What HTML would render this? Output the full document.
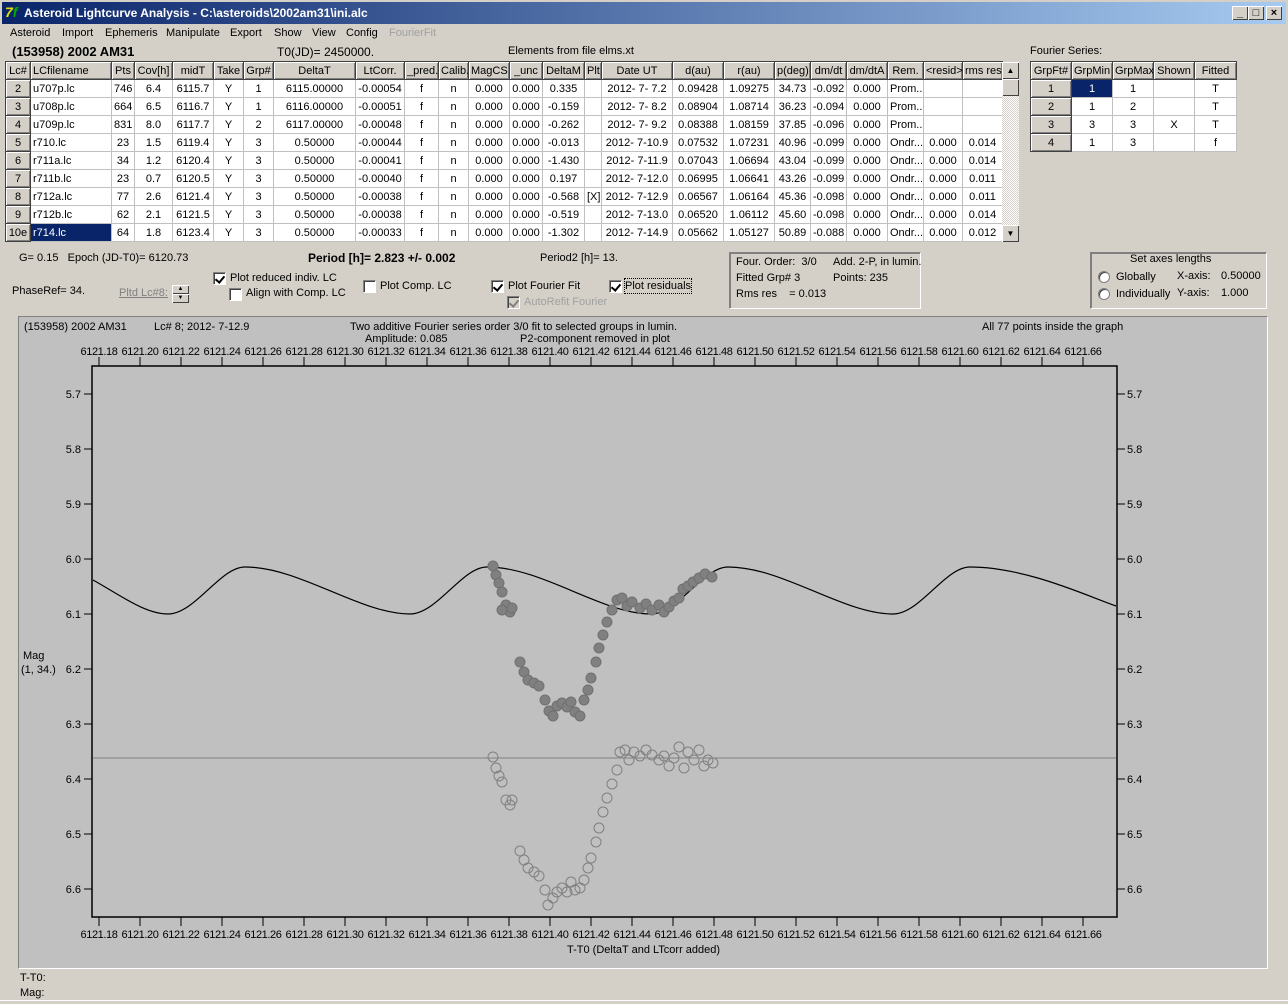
<!DOCTYPE html>
<html><head><meta charset="utf-8"><style>
*{margin:0;padding:0;box-sizing:border-box}
body{width:1288px;height:1004px;background:#d4d0c8;font-family:"Liberation Sans",sans-serif;font-size:11px;color:#000;position:relative;overflow:hidden}
.a{position:absolute;white-space:nowrap;line-height:14px}
.b{font-weight:bold}
.g{color:#808080}
table{position:absolute;border-collapse:collapse;table-layout:fixed;background:#fff}
td,th{height:18px;padding:0 2px;border:1px solid #c0c0c0;font-weight:normal;text-align:center;overflow:hidden;white-space:nowrap;font-size:11px}
th,td.h{background:#d4d0c8;box-shadow:inset 1px 1px #fff,inset -1px -1px #808080;border:1px solid #404040}
td.l{text-align:left}
td.sel{background:#0a246a;color:#fff;text-align:left}
.cb{position:absolute;width:13px;height:13px;background:#fff;border:1px solid;border-color:#808080 #fff #fff #808080;box-shadow:inset 1px 1px #404040}
.cb.k::after{content:"";position:absolute;left:3px;top:1px;width:4px;height:7px;border:solid #000;border-width:0 2px 2px 0;transform:rotate(40deg)}
.cb.dis{background:#d4d0c8}.cb.dis::after{border-color:#808080}
.grp{position:absolute;border:1px solid;border-color:#808080 #fff #fff #808080;box-shadow:1px 1px #808080 inset}
.rad{position:absolute;width:12px;height:12px;border-radius:50%;background:#fff;border:1px solid #808080;box-shadow:inset 1px 1px #404040}
.btn{position:absolute;width:16px;height:14px;background:#d4d0c8;box-shadow:inset 1px 1px #fff,inset -1px -1px #404040;font-size:11px;font-weight:bold;text-align:center;line-height:14px}
</style></head><body>
<!-- title bar -->
<div class="a" style="left:0;top:0;width:1288px;height:24px;background:linear-gradient(90deg,#0a246a,#a6caf0);border:2px solid #d4d0c8;border-bottom:0"></div>
<div class="a" style="left:5px;top:4px;width:17px;height:17px;color:#e0e000;font-weight:bold;font-size:14px;line-height:17px;font-style:italic">7<span style="color:#0a0">f</span></div>
<div class="a b" style="left:24px;top:6px;color:#fff;font-size:12px">Asteroid Lightcurve Analysis - C:\asteroids\2002am31\ini.alc</div>
<div class="btn" style="left:1232px;top:6px">_</div><div class="btn" style="left:1248px;top:6px">&#9633;</div><div class="btn" style="left:1266px;top:6px">×</div>
<!-- menu -->
<div class="a" style="left:10px;top:26px">Asteroid</div>
<div class="a" style="left:62px;top:26px">Import</div>
<div class="a" style="left:105px;top:26px">Ephemeris</div>
<div class="a" style="left:166px;top:26px">Manipulate</div>
<div class="a" style="left:230px;top:26px">Export</div>
<div class="a" style="left:274px;top:26px">Show</div>
<div class="a" style="left:312px;top:26px">View</div>
<div class="a" style="left:346px;top:26px">Config</div>
<div class="a g" style="left:389px;top:26px;color:#a0a0a0">FourierFit</div>
<div class="a b" style="left:12px;top:45px;font-size:13px">(153958) 2002 AM31</div>
<div class="a" style="left:277px;top:45px;font-size:12px">T0(JD)= 2450000.</div>
<div class="a" style="left:508px;top:44px">Elements from file elms.xt</div>
<div class="a" style="left:1030px;top:44px">Fourier Series:</div>
<!-- main table -->
<table style="left:5px;top:61px;width:997px">
<colgroup><col style="width:25px"><col style="width:81px"><col style="width:23px"><col style="width:38px"><col style="width:41px"><col style="width:30px"><col style="width:30px"><col style="width:82px"><col style="width:49px"><col style="width:34px"><col style="width:30px"><col style="width:41px"><col style="width:33px"><col style="width:42px"><col style="width:17px"><col style="width:71px"><col style="width:51px"><col style="width:51px"><col style="width:36px"><col style="width:36px"><col style="width:41px"><col style="width:36px"><col style="width:39px"><col style="width:40px"></colgroup>
<tr><th>Lc#</th><th style="text-align:left">LCfilename</th><th>Pts</th><th>Cov[h]</th><th>midT</th><th>Take</th><th>Grp#</th><th>DeltaT</th><th>LtCorr.</th><th>_pred.</th><th>Calib.</th><th>MagCS</th><th>_unc</th><th>DeltaM</th><th>Plt</th><th>Date UT</th><th>d(au)</th><th>r(au)</th><th>p(deg)</th><th>dm/dt</th><th>dm/dtA</th><th>Rem.</th><th>&lt;resid&gt;</th><th>rms res</th></tr>
<tr><td class="h">2</td><td class="l">u707p.lc</td><td>746</td><td>6.4</td><td>6115.7</td><td>Y</td><td>1</td><td>6115.00000</td><td>-0.00054</td><td>f</td><td>n</td><td>0.000</td><td>0.000</td><td>0.335</td><td></td><td>2012- 7- 7.2</td><td>0.09428</td><td>1.09275</td><td>34.73</td><td>-0.092</td><td>0.000</td><td class="l">Prom...</td><td></td><td></td></tr>
<tr><td class="h">3</td><td class="l">u708p.lc</td><td>664</td><td>6.5</td><td>6116.7</td><td>Y</td><td>1</td><td>6116.00000</td><td>-0.00051</td><td>f</td><td>n</td><td>0.000</td><td>0.000</td><td>-0.159</td><td></td><td>2012- 7- 8.2</td><td>0.08904</td><td>1.08714</td><td>36.23</td><td>-0.094</td><td>0.000</td><td class="l">Prom...</td><td></td><td></td></tr>
<tr><td class="h">4</td><td class="l">u709p.lc</td><td>831</td><td>8.0</td><td>6117.7</td><td>Y</td><td>2</td><td>6117.00000</td><td>-0.00048</td><td>f</td><td>n</td><td>0.000</td><td>0.000</td><td>-0.262</td><td></td><td>2012- 7- 9.2</td><td>0.08388</td><td>1.08159</td><td>37.85</td><td>-0.096</td><td>0.000</td><td class="l">Prom...</td><td></td><td></td></tr>
<tr><td class="h">5</td><td class="l">r710.lc</td><td>23</td><td>1.5</td><td>6119.4</td><td>Y</td><td>3</td><td>0.50000</td><td>-0.00044</td><td>f</td><td>n</td><td>0.000</td><td>0.000</td><td>-0.013</td><td></td><td>2012- 7-10.9</td><td>0.07532</td><td>1.07231</td><td>40.96</td><td>-0.099</td><td>0.000</td><td class="l">Ondr...</td><td>0.000</td><td>0.014</td></tr>
<tr><td class="h">6</td><td class="l">r711a.lc</td><td>34</td><td>1.2</td><td>6120.4</td><td>Y</td><td>3</td><td>0.50000</td><td>-0.00041</td><td>f</td><td>n</td><td>0.000</td><td>0.000</td><td>-1.430</td><td></td><td>2012- 7-11.9</td><td>0.07043</td><td>1.06694</td><td>43.04</td><td>-0.099</td><td>0.000</td><td class="l">Ondr...</td><td>0.000</td><td>0.014</td></tr>
<tr><td class="h">7</td><td class="l">r711b.lc</td><td>23</td><td>0.7</td><td>6120.5</td><td>Y</td><td>3</td><td>0.50000</td><td>-0.00040</td><td>f</td><td>n</td><td>0.000</td><td>0.000</td><td>0.197</td><td></td><td>2012- 7-12.0</td><td>0.06995</td><td>1.06641</td><td>43.26</td><td>-0.099</td><td>0.000</td><td class="l">Ondr...</td><td>0.000</td><td>0.011</td></tr>
<tr><td class="h">8</td><td class="l">r712a.lc</td><td>77</td><td>2.6</td><td>6121.4</td><td>Y</td><td>3</td><td>0.50000</td><td>-0.00038</td><td>f</td><td>n</td><td>0.000</td><td>0.000</td><td>-0.568</td><td>[X]</td><td>2012- 7-12.9</td><td>0.06567</td><td>1.06164</td><td>45.36</td><td>-0.098</td><td>0.000</td><td class="l">Ondr...</td><td>0.000</td><td>0.011</td></tr>
<tr><td class="h">9</td><td class="l">r712b.lc</td><td>62</td><td>2.1</td><td>6121.5</td><td>Y</td><td>3</td><td>0.50000</td><td>-0.00038</td><td>f</td><td>n</td><td>0.000</td><td>0.000</td><td>-0.519</td><td></td><td>2012- 7-13.0</td><td>0.06520</td><td>1.06112</td><td>45.60</td><td>-0.098</td><td>0.000</td><td class="l">Ondr...</td><td>0.000</td><td>0.014</td></tr>
<tr><td class="h">10e</td><td class="sel">r714.lc</td><td>64</td><td>1.8</td><td>6123.4</td><td>Y</td><td>3</td><td>0.50000</td><td>-0.00033</td><td>f</td><td>n</td><td>0.000</td><td>0.000</td><td>-1.302</td><td></td><td>2012- 7-14.9</td><td>0.05662</td><td>1.05127</td><td>50.89</td><td>-0.088</td><td>0.000</td><td class="l">Ondr...</td><td>0.000</td><td>0.012</td></tr>
</table>
<!-- scrollbar -->
<div class="a" style="left:1002px;top:62px;width:17px;height:180px;background:repeating-conic-gradient(#fff 0 25%,#d4d0c8 0 50%) 0 0/2px 2px"></div>
<div class="btn" style="left:1002px;top:62px;width:17px;height:17px;font-size:8px;line-height:17px">&#9650;</div>
<div class="btn" style="left:1002px;top:79px;width:17px;height:17px"></div>
<div class="btn" style="left:1002px;top:225px;width:17px;height:17px;font-size:8px;line-height:17px">&#9660;</div>
<!-- fourier table -->
<table style="left:1030px;top:61px;width:206px">
<colgroup><col style="width:41px"><col style="width:41px"><col style="width:41px"><col style="width:41px"><col style="width:42px"></colgroup>
<tr><th>GrpFt#</th><th>GrpMin</th><th>GrpMax</th><th>Shown</th><th>Fitted</th></tr>
<tr><td class="h">1</td><td style="background:#0a246a;color:#fff">1</td><td>1</td><td></td><td>T</td></tr>
<tr><td class="h">2</td><td>1</td><td>2</td><td></td><td>T</td></tr>
<tr><td class="h">3</td><td>3</td><td>3</td><td>X</td><td>T</td></tr>
<tr><td class="h">4</td><td>1</td><td>3</td><td></td><td>f</td></tr>
</table>
<!-- controls -->
<div class="a" style="left:19px;top:251px">G= 0.15&nbsp;&nbsp; Epoch (JD-T0)= 6120.73</div>
<div class="a b" style="left:308px;top:251px;font-size:12px">Period [h]= 2.823 +/- 0.002</div>
<div class="a" style="left:540px;top:251px">Period2 [h]= 13.</div>
<div class="a" style="left:12px;top:284px">PhaseRef= 34.</div>
<div class="a g" style="left:119px;top:286px;text-decoration:underline">Pltd Lc#8:</div>
<div class="btn" style="left:172px;top:285px;width:17px;height:9px;font-size:6px;line-height:9px">&#9650;</div>
<div class="btn" style="left:172px;top:294px;width:17px;height:9px;font-size:6px;line-height:9px">&#9660;</div>
<div class="cb k" style="left:213px;top:272px"></div><div class="a" style="left:230px;top:271px">Plot reduced indiv. LC</div>
<div class="cb" style="left:229px;top:288px"></div><div class="a" style="left:246px;top:286px">Align with Comp. LC</div>
<div class="cb" style="left:363px;top:280px"></div><div class="a" style="left:380px;top:279px">Plot Comp. LC</div>
<div class="cb k" style="left:491px;top:280px"></div><div class="a" style="left:508px;top:279px">Plot Fourier Fit</div>
<div class="cb k" style="left:609px;top:280px"></div><div class="a" style="left:625px;top:279px;outline:1px dotted #000">Plot residuals</div>
<div class="cb k dis" style="left:507px;top:296px"></div><div class="a" style="left:524px;top:295px;color:#a0a0a0">AutoRefit Fourier</div>
<div class="grp" style="left:729px;top:252px;width:192px;height:57px"></div>
<div class="a" style="left:736px;top:255px">Four. Order:&nbsp; 3/0</div>
<div class="a" style="left:833px;top:255px">Add. 2-P, in lumin.</div>
<div class="a" style="left:736px;top:271px">Fitted Grp# 3</div>
<div class="a" style="left:833px;top:271px">Points: 235</div>
<div class="a" style="left:736px;top:287px">Rms res&nbsp;&nbsp;&nbsp; = 0.013</div>
<div class="grp" style="left:1090px;top:252px;width:177px;height:57px"></div>
<div class="a" style="left:1130px;top:252px">Set axes lengths</div>
<div class="rad" style="left:1098px;top:271px"></div><div class="a" style="left:1116px;top:270px">Globally</div>
<div class="a" style="left:1177px;top:269px">X-axis:</div><div class="a" style="left:1221px;top:269px">0.50000</div>
<div class="rad" style="left:1098px;top:288px"></div><div class="a" style="left:1116px;top:287px">Individually</div>
<div class="a" style="left:1177px;top:286px">Y-axis:</div><div class="a" style="left:1221px;top:286px">1.000</div>
<!-- plot panel -->
<div class="a" style="left:18px;top:316px;width:1250px;height:653px;background:#c0c0c0;border-top:1px solid #808080;border-left:1px solid #808080;border-bottom:1px solid #fff;border-right:1px solid #fff"></div>
<div class="a" style="left:24px;top:320px">(153958) 2002 AM31</div>
<div class="a" style="left:154px;top:320px">Lc# 8; 2012- 7-12.9</div>
<div class="a" style="left:350px;top:320px">Two additive Fourier series order 3/0 fit to selected groups in lumin.</div>
<div class="a" style="left:365px;top:332px">Amplitude: 0.085</div>
<div class="a" style="left:520px;top:332px">P2-component removed in plot</div>
<div class="a" style="left:982px;top:320px">All 77 points inside the graph</div>
<div class="a" style="left:23px;top:649px">Mag</div>
<div class="a" style="left:21px;top:663px">(1, 34.)</div>
<div class="a" style="left:567px;top:943px">T-T0 (DeltaT and LTcorr added)</div>
<div class="a" style="left:20px;top:971px">T-T0:</div>
<div class="a" style="left:20px;top:986px">Mag:</div>
<div class="a" style="left:0;top:1000px;width:1288px;height:4px;border-top:1px solid #fff"></div>
<svg class="a" style="left:0;top:0" width="1288" height="1004" font-family="Liberation Sans, sans-serif" font-size="11">
<rect x="92" y="366" width="1025" height="551" fill="none" stroke="#000" stroke-width="1.5"/>
<g stroke="#000">
<path d="M99 357v9M140 357v9M181 357v9M222 357v9M263 357v9M304 357v9M345 357v9M386 357v9M427 357v9M468 357v9M509 357v9M550 357v9M591 357v9M632 357v9M673 357v9M714 357v9M755 357v9M796 357v9M837 357v9M878 357v9M919 357v9M960 357v9M1001 357v9M1042 357v9M1083 357v9"/>
<path d="M99 917v9M140 917v9M181 917v9M222 917v9M263 917v9M304 917v9M345 917v9M386 917v9M427 917v9M468 917v9M509 917v9M550 917v9M591 917v9M632 917v9M673 917v9M714 917v9M755 917v9M796 917v9M837 917v9M878 917v9M919 917v9M960 917v9M1001 917v9M1042 917v9M1083 917v9"/>
<path d="M84 394h8M84 449h8M84 504h8M84 559h8M84 614h8M84 669h8M84 724h8M84 779h8M84 834h8M84 889h8"/>
<path d="M1117 394h8M1117 449h8M1117 504h8M1117 559h8M1117 614h8M1117 669h8M1117 724h8M1117 779h8M1117 834h8M1117 889h8"/>
</g>
<g text-anchor="middle" letter-spacing="-0.4">
<text x="99" y="355">6121.18</text><text x="140" y="355">6121.20</text><text x="181" y="355">6121.22</text><text x="222" y="355">6121.24</text><text x="263" y="355">6121.26</text><text x="304" y="355">6121.28</text><text x="345" y="355">6121.30</text><text x="386" y="355">6121.32</text><text x="427" y="355">6121.34</text><text x="468" y="355">6121.36</text><text x="509" y="355">6121.38</text><text x="550" y="355">6121.40</text><text x="591" y="355">6121.42</text><text x="632" y="355">6121.44</text><text x="673" y="355">6121.46</text><text x="714" y="355">6121.48</text><text x="755" y="355">6121.50</text><text x="796" y="355">6121.52</text><text x="837" y="355">6121.54</text><text x="878" y="355">6121.56</text><text x="919" y="355">6121.58</text><text x="960" y="355">6121.60</text><text x="1001" y="355">6121.62</text><text x="1042" y="355">6121.64</text><text x="1083" y="355">6121.66</text>
</g>
<g text-anchor="middle" letter-spacing="-0.4">
<text x="99" y="938">6121.18</text><text x="140" y="938">6121.20</text><text x="181" y="938">6121.22</text><text x="222" y="938">6121.24</text><text x="263" y="938">6121.26</text><text x="304" y="938">6121.28</text><text x="345" y="938">6121.30</text><text x="386" y="938">6121.32</text><text x="427" y="938">6121.34</text><text x="468" y="938">6121.36</text><text x="509" y="938">6121.38</text><text x="550" y="938">6121.40</text><text x="591" y="938">6121.42</text><text x="632" y="938">6121.44</text><text x="673" y="938">6121.46</text><text x="714" y="938">6121.48</text><text x="755" y="938">6121.50</text><text x="796" y="938">6121.52</text><text x="837" y="938">6121.54</text><text x="878" y="938">6121.56</text><text x="919" y="938">6121.58</text><text x="960" y="938">6121.60</text><text x="1001" y="938">6121.62</text><text x="1042" y="938">6121.64</text><text x="1083" y="938">6121.66</text>
</g>
<g text-anchor="end">
<text x="81" y="398">5.7</text><text x="81" y="453">5.8</text><text x="81" y="508">5.9</text><text x="81" y="563">6.0</text><text x="81" y="618">6.1</text><text x="81" y="673">6.2</text><text x="81" y="728">6.3</text><text x="81" y="783">6.4</text><text x="81" y="838">6.5</text><text x="81" y="893">6.6</text>
</g>
<g>
<text x="1127" y="398">5.7</text><text x="1127" y="453">5.8</text><text x="1127" y="508">5.9</text><text x="1127" y="563">6.0</text><text x="1127" y="618">6.1</text><text x="1127" y="673">6.2</text><text x="1127" y="728">6.3</text><text x="1127" y="783">6.4</text><text x="1127" y="838">6.5</text><text x="1127" y="893">6.6</text>
</g>
<line x1="93" y1="758" x2="1116" y2="758" stroke="#808080"/>
<path d="M93,580 C120,595 145,614 168,614 C195,614 220,567 245,567 C300,567 360,614 410,614 C437,614 462,567 487,567 C542,567 602,614 651,614 C678,614 703,567 728,567 C783,567 843,614 893,614 C920,614 945,567 970,567 C1025,567 1085,595 1116,606" fill="none" stroke="#000" stroke-width="1.2"/>
<g fill="#808080" stroke="#707070">
<circle cx="493" cy="566" r="5"/><circle cx="496" cy="575" r="5"/><circle cx="499" cy="583" r="5"/><circle cx="502" cy="592" r="5"/><circle cx="506" cy="605" r="5"/><circle cx="510" cy="612" r="5"/><circle cx="512" cy="608" r="5"/>
<circle cx="520" cy="662" r="5"/><circle cx="524" cy="672" r="5"/><circle cx="528" cy="680" r="5"/><circle cx="534" cy="683" r="5"/><circle cx="539" cy="686" r="5"/><circle cx="545" cy="700" r="5"/><circle cx="549" cy="711" r="5"/><circle cx="553" cy="716" r="5"/><circle cx="557" cy="706" r="5"/><circle cx="562" cy="703" r="5"/><circle cx="567" cy="707" r="5"/><circle cx="571" cy="702" r="5"/><circle cx="575" cy="712" r="5"/><circle cx="580" cy="716" r="5"/><circle cx="584" cy="700" r="5"/><circle cx="588" cy="690" r="5"/><circle cx="591" cy="678" r="5"/><circle cx="596" cy="662" r="5"/><circle cx="599" cy="648" r="5"/><circle cx="603" cy="635" r="5"/><circle cx="607" cy="622" r="5"/><circle cx="612" cy="610" r="5"/><circle cx="617" cy="600" r="5"/><circle cx="622" cy="598" r="5"/><circle cx="627" cy="606" r="5"/><circle cx="632" cy="602" r="5"/><circle cx="640" cy="608" r="5"/><circle cx="646" cy="604" r="5"/><circle cx="652" cy="610" r="5"/><circle cx="659" cy="605" r="5"/><circle cx="664" cy="612" r="5"/><circle cx="669" cy="607" r="5"/><circle cx="674" cy="601" r="5"/><circle cx="679" cy="598" r="5"/><circle cx="683" cy="589" r="5"/><circle cx="688" cy="586" r="5"/><circle cx="693" cy="582" r="5"/><circle cx="699" cy="578" r="5"/><circle cx="705" cy="574" r="5"/><circle cx="712" cy="577" r="5"/><circle cx="502" cy="610" r="5"/>
</g>
<g fill="none" stroke="#808080">
<circle cx="493" cy="757" r="5"/><circle cx="496" cy="768" r="5"/><circle cx="499" cy="776" r="5"/><circle cx="502" cy="782" r="5"/><circle cx="506" cy="800" r="5"/><circle cx="510" cy="805" r="5"/><circle cx="512" cy="800" r="5"/>
<circle cx="520" cy="851" r="5"/><circle cx="524" cy="860" r="5"/><circle cx="528" cy="868" r="5"/><circle cx="534" cy="872" r="5"/><circle cx="539" cy="876" r="5"/><circle cx="545" cy="890" r="5"/><circle cx="548" cy="905" r="5"/><circle cx="553" cy="898" r="5"/><circle cx="557" cy="892" r="5"/><circle cx="562" cy="888" r="5"/><circle cx="567" cy="892" r="5"/><circle cx="571" cy="882" r="5"/><circle cx="575" cy="890" r="5"/><circle cx="580" cy="888" r="5"/><circle cx="584" cy="880" r="5"/><circle cx="588" cy="868" r="5"/><circle cx="591" cy="858" r="5"/><circle cx="596" cy="842" r="5"/><circle cx="599" cy="828" r="5"/><circle cx="603" cy="812" r="5"/><circle cx="607" cy="798" r="5"/><circle cx="612" cy="784" r="5"/><circle cx="617" cy="770" r="5"/><circle cx="620" cy="752" r="5"/><circle cx="625" cy="750" r="5"/><circle cx="629" cy="760" r="5"/><circle cx="634" cy="752" r="5"/><circle cx="640" cy="756" r="5"/><circle cx="646" cy="750" r="5"/><circle cx="652" cy="755" r="5"/><circle cx="659" cy="760" r="5"/><circle cx="664" cy="756" r="5"/><circle cx="669" cy="766" r="5"/><circle cx="674" cy="758" r="5"/><circle cx="679" cy="747" r="5"/><circle cx="684" cy="768" r="5"/><circle cx="688" cy="752" r="5"/><circle cx="694" cy="760" r="5"/><circle cx="699" cy="750" r="5"/><circle cx="704" cy="766" r="5"/><circle cx="708" cy="760" r="5"/><circle cx="713" cy="763" r="5"/>
</g>
</svg>
</body></html>
